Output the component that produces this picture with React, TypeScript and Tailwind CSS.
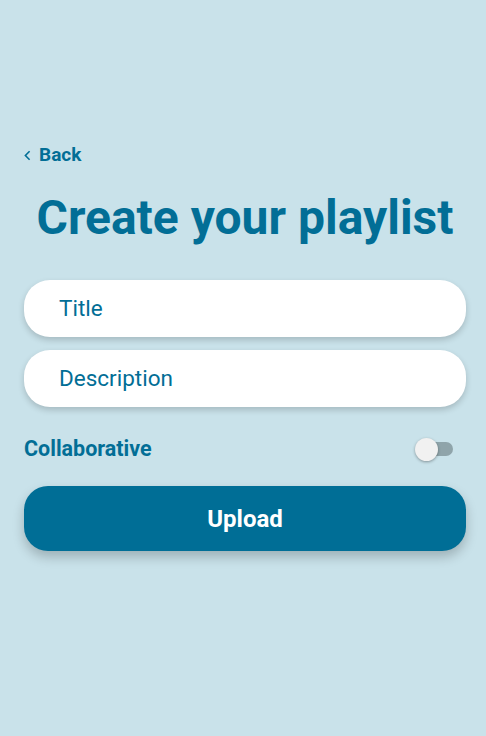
import React from "react";

export default function App() {
  return (
    <div className="min-h-[736px] w-full bg-[#c9e2ea] pl-6 pr-5 pt-[143px] font-['Roboto',sans-serif] text-[#026e96]">
      <div className="flex h-6 items-center gap-[8px]">
        <svg width="7" height="11" viewBox="0 0 7 11">
          <path d="M5.6 1.2 L1.4 5.5 L5.6 9.8" fill="none" stroke="#026e96" strokeWidth="1.6" />
        </svg>
        <span className="text-[19px] font-bold leading-6">Back</span>
      </div>
      <h1 className="mt-[23px] text-center text-[48px] font-bold leading-[56px]">Create your playlist</h1>
      <div className="mt-[34px] flex flex-col gap-[13px]">
        <div className="flex h-[57px] items-center rounded-[26px] bg-white pl-[35px] text-[22.5px] shadow-[0_3px_6px_rgba(0,0,0,0.18)]">
          Title
        </div>
        <div className="flex h-[57px] items-center rounded-[26px] bg-white pl-[35px] text-[22.5px] shadow-[0_3px_6px_rgba(0,0,0,0.18)]">
          Description
        </div>
      </div>
      <div className="mt-[20px] flex h-[44px] items-center justify-between">
        <span className="text-[21.5px] font-bold">Collaborative</span>
        <div className="relative mr-[13px] h-[23px] w-[38px]">
          <div className="absolute right-0 top-[4.5px] h-[14px] w-[34px] rounded-full bg-[#8fa4aa]" />
          <div className="absolute left-0 top-0 h-[23px] w-[23px] rounded-full bg-[#f1f1f1] shadow-[0_1px_3px_rgba(0,0,0,0.35)]" />
        </div>
      </div>
      <div className="mt-[15px] flex h-[65px] items-center justify-center rounded-[24px] bg-[#006e96] text-[24px] font-bold text-white shadow-[0_6px_12px_rgba(0,0,0,0.22)]">
        Upload
      </div>
    </div>
  );
}
